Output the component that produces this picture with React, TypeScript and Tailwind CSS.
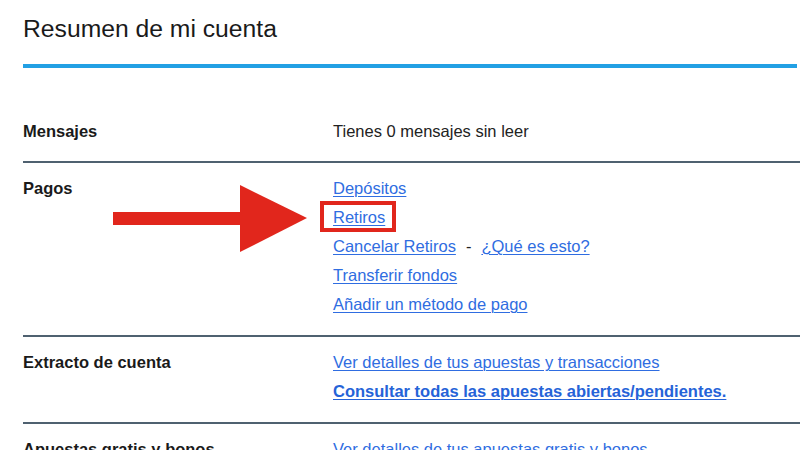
import React from "react";

const linkCls = "text-[#2f6de1] underline decoration-1 underline-offset-[2px]";

function Row({ label, children, className = "" }: { label: string; children: React.ReactNode; className?: string }) {
  return (
    <div className={`flex border-t-2 border-[#4f6170] pt-[11px] pb-[16px] ${className}`}>
      <div className="w-[310px] shrink-0 font-bold text-[#1a1a1a]">{label}</div>
      <div className="flex flex-col">{children}</div>
    </div>
  );
}

export default function App() {
  return (
    <div
      className="relative w-[800px] h-[450px] overflow-hidden bg-white pl-[23px] text-[16.5px] leading-[29px] text-[#222]"
      style={{ fontFamily: '"Liberation Sans", Arial, sans-serif' }}
    >
      <h1 className="pt-[15px] text-[24.7px] leading-[28px] text-[#1a1a1a] font-normal">Resumen de mi cuenta</h1>
      <div className="mt-[21px] h-[4px] w-[774px] bg-[#22a0e4]" />

      <div className="flex pt-[49px] pb-[15px]">
        <div className="w-[310px] shrink-0 font-bold text-[#1a1a1a]">Mensajes</div>
        <div>Tienes 0 mensajes sin leer</div>
      </div>

      <Row label="Pagos">
        <a className={linkCls}>Depósitos</a>
        <div>
          <span className="relative inline-block">
            <a className={linkCls}>Retiros</a>
            <span className="absolute -left-[13px] -right-[11px] -top-[2px] bottom-0 border-4 border-[#e1261c]" />
          </span>
        </div>
        <div>
          <a className={linkCls}>Cancelar Retiros</a>
          <span className="mx-[10px] text-[#222]">-</span>
          <a className={linkCls}>¿Qué es esto?</a>
        </div>
        <div>
          <a className={linkCls}>Transferir fondos</a>
        </div>
        <div>
          <a className={linkCls}>Añadir un método de pago</a>
        </div>
      </Row>

      <Row label="Extracto de cuenta">
        <div>
          <a className={linkCls}>Ver detalles de tus apuestas y transacciones</a>
        </div>
        <div>
          <a className={`${linkCls} font-bold text-[#2563d8]`}>Consultar todas las apuestas abiertas/pendientes.</a>
        </div>
      </Row>

      <Row label="Apuestas gratis y bonos">
        <div>
          <a className={linkCls}>Ver detalles de tus apuestas gratis y bonos</a>
        </div>
      </Row>

      <svg className="absolute left-0 top-0" width="800" height="450" viewBox="0 0 800 450">
        <rect x="113" y="212" width="130" height="13" fill="#e1261c" />
        <polygon points="240,185 307,218 240,252" fill="#e1261c" />
      </svg>
    </div>
  );
}
